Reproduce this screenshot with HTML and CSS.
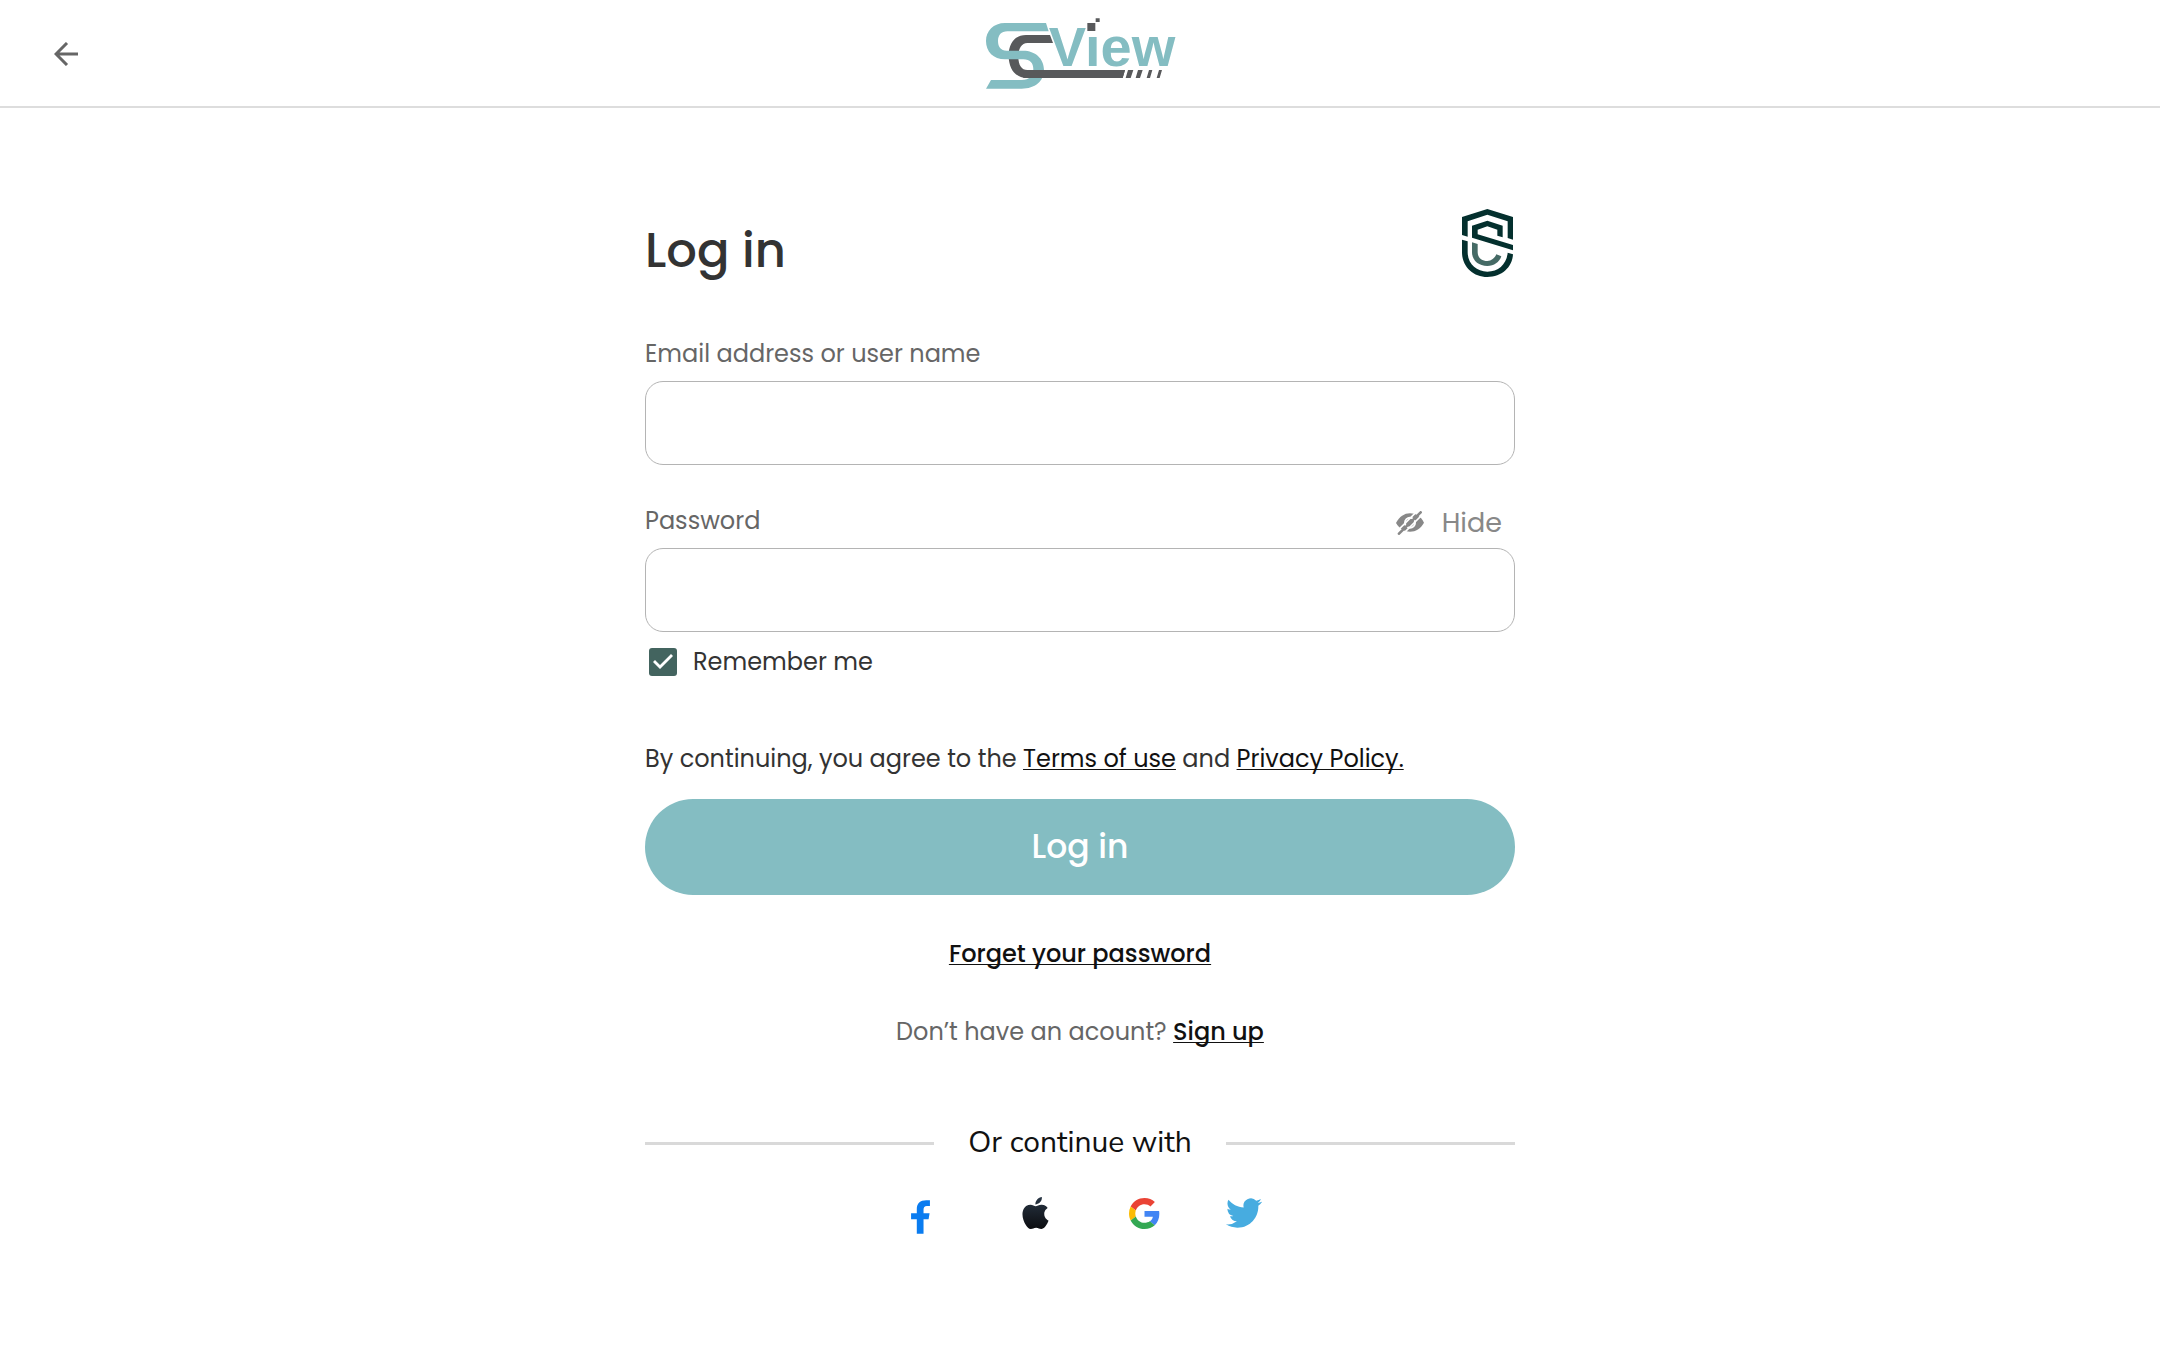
FILE: index.html
```html
<!DOCTYPE html>
<html lang="en">
<head>
<meta charset="utf-8">
<meta name="viewport" content="width=device-width, initial-scale=1">
<title>SC View – Log in</title>
<link rel="stylesheet" href="styles.css">
</head>
<body>
<header class="topbar">
  <button class="back" type="button" aria-label="Back">
    <svg width="24" height="24" viewBox="0 0 24 24" fill="none" stroke="#666" stroke-width="3"><path d="M24 12H2M13 1 2 12l11 11"/></svg>
  </button>
  <svg class="logo" width="220" height="97" viewBox="0 0 660 291" role="img" aria-label="SC View">
    <path fill="#58595b" d="M240 90H168C135 90 116 115 116 152C116 192 137 219 170 219H458L465 195H172C155 195 145 180 145 155C145 130 155 114 172 114H249Z"/>
    <path fill="#84bdc2" d="M228 54H105C70 54 48 78 48 108C48 140 70 163 105 163H160C180 163 190 175 190 192C190 212 178 225 155 225H63L48 251H155C195 251 222 228 222 195C222 160 195 137 160 137H110C92 137 84 125 84 108C84 90 94 79 112 79H236Z"/>
    <path fill="#58595b" d="M160 195H465L458 219H160ZM474 195H490L482 219H467ZM504 195H518L510 219H497ZM537 195H547L540 219H530ZM567 195H576L569 219H560Z"/>
    <text class="logo-word" x="236" y="184">View</text>
    <path fill="#fff" d="M350 40H384V85H350Z"/>
    <path fill="#58595b" d="M352 54H376V78H352ZM377 40H389V51H377Z"/>
  </svg>
</header>

<main class="page">
  <form class="login">
    <div class="title-row">
      <h1 class="title">Log in</h1>
      <svg class="shield" width="56" height="72" viewBox="57 36 168 216" aria-hidden="true">
        <path fill="#04302e" d="M66 66L142 42L219 66V134L203 129V79L142 59L83 79V125L66 120ZM96 92L142 77L188 92V127L172 122V104L142 94L113 104V118L219 150V166L96 128ZM66 134L83 139V172C83 206 110 230 142 230C175 230 200 208 203 173L219 178C217 217 185 246 142 246C100 246 66 215 66 172Z"/>
        <path fill="#456a65" d="M96 142L113 147V172C113 188 126 198 142 198C154 198 164 190 169 178L184 184C178 202 162 213 142 213C116 213 96 196 96 172Z"/>
      </svg>
    </div>

    <label class="label" for="email">Email address or user name</label>
    <input class="field" id="email" type="text" autocomplete="username">

    <div class="label-row">
      <label class="label" for="password">Password</label>
      <button class="toggle" type="button">
        <svg width="28" height="24" viewBox="49 65 84 72" aria-hidden="true">
          <path fill="#888" d="M49 101C59 82 74 72 91 72C108 72 124 82 133 100C123 118 108 127 91 127C74 127 59 118 49 101Z"/>
          <circle cx="91" cy="100" r="15" fill="none" stroke="#fff" stroke-width="6"/>
          <path d="M54 124L116 62M64 140L130 74" stroke="#fff" stroke-width="5"/>
          <path d="M58 133L123 69" stroke="#888" stroke-width="8" stroke-linecap="round"/>
        </svg>
        Hide
      </button>
    </div>
    <input class="field" id="password" type="password" autocomplete="current-password">

    <label class="remember"><input class="check" type="checkbox" checked>Remember me</label>

    <p class="terms">By continuing, you agree to the <a href="#terms">Terms of use</a> and <a href="#privacy">Privacy Policy.</a></p>
    <button class="submit" type="submit">Log in</button>
    <a class="forgot" href="#forgot">Forget your password</a>
    <p class="signup">Don’t have an acount? <a href="#signup">Sign up</a></p>

    <div class="divider">Or continue with</div>
    <div class="social">
      <button class="facebook" type="button" aria-label="Facebook">
        <svg width="19" height="34" viewBox="93 273 56 101"><path fill="#0a7cf0" d="M149 274H138C120 274 110 284 110 300V312H93V330H110V373H130V330H145L148 312H130V302C130 295 133 291 140 291H149Z"/></svg>
      </button>
      <button class="apple" type="button" aria-label="Apple">
        <svg width="27" height="32" viewBox="2 0 20 24"><defs><linearGradient id="ink" x1="0" y1="0" x2="0" y2="1"><stop offset="0" stop-color="#283544"/><stop offset="1" stop-color="#0c0d10"/></linearGradient></defs><path fill="url(#ink)" d="M12.152 6.896c-.948 0-2.415-1.078-3.96-1.04-2.04.027-3.91 1.183-4.961 3.014-2.117 3.675-.546 9.103 1.519 12.09 1.013 1.454 2.208 3.09 3.792 3.039 1.52-.065 2.09-.987 3.935-.987 1.831 0 2.35.987 3.96.948 1.637-.026 2.676-1.48 3.676-2.948 1.156-1.688 1.636-3.325 1.662-3.415-.039-.013-3.182-1.221-3.22-4.857-.026-3.04 2.48-4.494 2.597-4.559-1.429-2.09-3.623-2.324-4.39-2.376-2-.156-3.675 1.09-4.61 1.09zM15.53 3.83c.843-1.012 1.4-2.427 1.245-3.83-1.207.052-2.662.805-3.532 1.818-.78.896-1.454 2.338-1.273 3.714 1.338.104 2.715-.688 3.559-1.701"/></svg>
      </button>
      <button type="button" aria-label="Google">
        <svg width="31" height="31" viewBox="0 0 48 48"><path fill="#ea4335" d="M24 9.5c3.54 0 6.71 1.22 9.21 3.6l6.85-6.85C35.9 2.38 30.47 0 24 0 14.62 0 6.51 5.38 2.56 13.22l7.98 6.19C12.43 13.72 17.74 9.5 24 9.5z"/><path fill="#4285f4" d="M46.98 24.55c0-1.57-.15-3.09-.38-4.55H24v9.02h12.94c-.58 2.96-2.26 5.48-4.78 7.18l7.73 6c4.51-4.18 7.09-10.36 7.09-17.65z"/><path fill="#fbbc05" d="M10.53 28.59A14.5 14.5 0 0 1 9.77 24c0-1.6.27-3.14.76-4.59l-7.98-6.19A23.9 23.9 0 0 0 0 24c0 3.88.92 7.54 2.56 10.78l7.97-6.19z"/><path fill="#34a853" d="M24 48c6.48 0 11.93-2.13 15.89-5.81l-7.73-6c-2.15 1.45-4.92 2.3-8.16 2.3-6.26 0-11.57-4.22-13.47-9.91l-7.98 6.19C6.51 42.62 14.62 48 24 48z"/></svg>
      </button>
      <button type="button" aria-label="Twitter">
        <svg width="36" height="30" viewBox="0 2 24 20"><path fill="#47ace0" d="M23.953 4.57a10 10 0 01-2.825.775 4.958 4.958 0 002.163-2.723c-.951.555-2.005.959-3.127 1.184a4.92 4.92 0 00-8.384 4.482C7.69 8.095 4.067 6.13 1.64 3.162a4.822 4.822 0 00-.666 2.475c0 1.71.87 3.213 2.188 4.096a4.904 4.904 0 01-2.228-.616v.06a4.923 4.923 0 003.946 4.827 4.996 4.996 0 01-2.212.085 4.936 4.936 0 004.604 3.417 9.867 9.867 0 01-6.102 2.105c-.39 0-.779-.023-1.17-.067a13.995 13.995 0 007.557 2.209c9.053 0 13.998-7.496 13.998-13.985 0-.21 0-.42-.015-.63A9.935 9.935 0 0024 4.59z"/></svg>
      </button>
    </div>
  </form>
</main>
</body>
</html>
```
FILE: styles.css
```css
* { box-sizing: border-box; }

body {
  margin: 0;
  background: #fff;
  color: #333;
  font-family: Poppins, Inter, sans-serif;
  font-size: 24px;
  line-height: 36px;
}

button {
  border: 0;
  padding: 0;
  background: none;
  font: inherit;
  cursor: pointer;
}

svg { display: block; }
p, h1 { margin: 0; }

a {
  color: #111;
  text-underline-offset: 2px;
  text-decoration-thickness: 1px;
  text-decoration-skip-ink: none;
}

.topbar {
  display: grid;
  grid-template-columns: 1fr auto 1fr;
  align-items: center;
  padding: 5px 54px 4px;
  border-bottom: 2px solid #ddd;
}

.back { justify-self: start; }

.logo-word {
  font: bold 168px "Liberation Sans", Arial, sans-serif;
  fill: #84bdc2;
}

.page { padding: 99px 24px; }

.login {
  display: flex;
  flex-direction: column;
  max-width: 870px;
  margin: 0 auto;
}

.title-row {
  display: flex;
  justify-content: space-between;
  height: 72px;
  margin-bottom: 57px;
}

.title {
  padding-top: 8px;
  font-size: 48px;
  line-height: 72px;
  font-weight: 500;
}

.label { color: #666; }

.label-row {
  display: flex;
  justify-content: space-between;
  align-items: center;
  margin-top: 38px;
}

.toggle {
  display: flex;
  align-items: center;
  gap: 18px;
  padding: 4px 13px 0 0;
  color: #888;
  font-size: 27px;
  line-height: 32px;
}

.field {
  width: 100%;
  height: 84px;
  margin-top: 9px;
  padding: 0 24px;
  border: 1px solid #b4b4b4;
  border-radius: 18px;
  background: #fff;
  font: inherit;
  color: #333;
}

.remember {
  display: flex;
  align-items: center;
  align-self: flex-start;
  gap: 16px;
  margin: 12px 0 0 4px;
}

.check {
  appearance: none;
  width: 28px;
  height: 28px;
  margin: 0;
  border-radius: 3px;
  background: #43645f;
  display: grid;
  place-items: center;
}

.check:checked::before {
  content: "";
  width: 20px;
  height: 16px;
  background: #fff;
  clip-path: polygon(0 50%, 10% 38%, 35% 69%, 90% 0, 100% 12%, 35% 94%);
}

.terms { margin-top: 61px; }

.submit {
  height: 96px;
  margin-top: 22px;
  border-radius: 48px;
  background: #84bdc2;
  color: #fff;
  font-size: 33px;
  font-weight: 500;
}

.forgot {
  align-self: center;
  margin-top: 41px;
  font-weight: 500;
}

.signup {
  margin-top: 42px;
  color: #666;
  text-align: center;
}

.signup a { font-weight: 500; }

.divider {
  display: flex;
  align-items: center;
  gap: 34px;
  margin-top: 75px;
  color: #111;
  font-family: Avenir, "Nunito Sans", Nunito, Lato, sans-serif;
  font-size: 30px;
  font-variant-ligatures: none;
}

.divider::before,
.divider::after {
  content: "";
  flex: 1;
  height: 3px;
  background: #d9d9d9;
}

.social {
  display: flex;
  justify-content: center;
  align-items: center;
  gap: 66px;
  margin-top: 31px;
  padding-left: 12px;
}

.facebook { margin: 8px 26px 0 0; }
.apple { margin-right: 14px; }
```
